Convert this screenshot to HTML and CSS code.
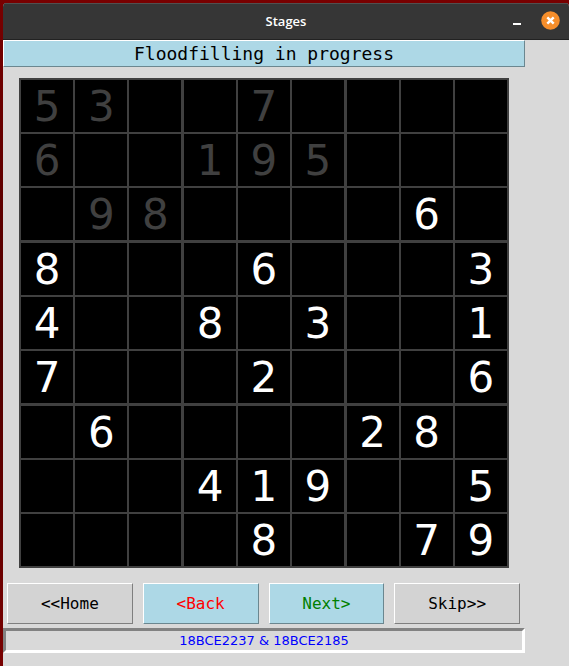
FILE: index.html
```html
<!DOCTYPE html>
<html lang="en">
<head>
<meta charset="utf-8">
<title>Stages</title>
<link rel="stylesheet" href="styles.css">
</head>
<body>
<div class="window">
  <header class="titlebar">
    <span class="titlebar-text">Stages</span>
    <div class="titlebar-actions">
      <button class="title-button" type="button" aria-label="Minimize">
        <svg width="8" height="18" viewBox="0 0 8 18"><path d="M0 11h8v2H0z" fill="#fff"/></svg>
      </button>
      <button class="title-button" type="button" aria-label="Close">
        <svg width="19" height="19" viewBox="0 0 19 19"><circle cx="9.500" cy="9.500" r="9.300" fill="#f68e2b"/><path d="M6.300 6.300l6.400 6.400M12.700 6.300l-6.400 6.400" stroke="#fff" stroke-width="2.400"/></svg>
      </button>
    </div>
  </header>
  <main class="content">
    <h1 class="status">Floodfilling in progress</h1>
    <table class="board" aria-label="Sudoku board">
      <tbody>
        <tr><td class="seen">5</td><td class="seen">3</td><td></td><td></td><td class="seen">7</td><td></td><td></td><td></td><td></td></tr>
        <tr><td class="seen">6</td><td></td><td></td><td class="seen">1</td><td class="seen">9</td><td class="seen">5</td><td></td><td></td><td></td></tr>
        <tr><td></td><td class="seen">9</td><td class="seen">8</td><td></td><td></td><td></td><td></td><td>6</td><td></td></tr>
        <tr><td>8</td><td></td><td></td><td></td><td>6</td><td></td><td></td><td></td><td>3</td></tr>
        <tr><td>4</td><td></td><td></td><td>8</td><td></td><td>3</td><td></td><td></td><td>1</td></tr>
        <tr><td>7</td><td></td><td></td><td></td><td>2</td><td></td><td></td><td></td><td>6</td></tr>
        <tr><td></td><td>6</td><td></td><td></td><td></td><td></td><td>2</td><td>8</td><td></td></tr>
        <tr><td></td><td></td><td></td><td>4</td><td>1</td><td>9</td><td></td><td></td><td>5</td></tr>
        <tr><td></td><td></td><td></td><td></td><td>8</td><td></td><td></td><td>7</td><td>9</td></tr>
      </tbody>
    </table>
    <nav class="controls" aria-label="Stage controls">
      <button class="control" type="button">&lt;&lt;Home</button>
      <button class="control control-step control-back" type="button">&lt;Back</button>
      <button class="control control-step control-next" type="button">Next&gt;</button>
      <button class="control" type="button">Skip&gt;&gt;</button>
    </nav>
    <footer class="credits">18BCE2237 &amp; 18BCE2185</footer>
  </main>
</div>
</body>
</html>
```
FILE: styles.css
```css
* {
  box-sizing: border-box;
}

body {
  margin: 0;
  padding: 3px 0 0 3px;
  min-height: 100vh;
  display: flex;
  background: linear-gradient(#780000, #500000 50%, #780000);
}

.window {
  flex: 1;
  background: #d9d9d9;
  border-radius: 4px 4px 0 0;
  overflow: hidden;
}

.titlebar {
  display: grid;
  grid-template-columns: 1fr auto 1fr;
  align-items: center;
  height: 37px;
  padding: 0 9px 2px;
  background: #363636;
  border-top: 1px solid #505050;
  border-bottom: 1px solid #222;
}

.titlebar-text {
  grid-column: 2;
  color: #fff;
  font: 600 13px/18px "Open Sans", "Noto Sans", sans-serif;
}

.titlebar-actions {
  display: flex;
  justify-content: flex-end;
  align-items: center;
  gap: 20px;
}

.title-button {
  display: flex;
  padding: 0;
  border: 0;
  background: none;
}

.content {
  padding-right: 44px;
}

.status {
  margin: 0;
  border: 1px solid;
  border-color: #fff #6b8790 #6b8790 #fff;
  background: #add8e6;
  color: #000;
  font: 400 18px/25px "DejaVu Sans Mono", monospace;
  text-align: center;
}

.board {
  width: calc(100% - 32px);
  height: 490px;
  margin: 11px 16px 0;
  table-layout: fixed;
  border-collapse: collapse;
  background: #000;
  color: #fff;
  font: 42px/48px "DejaVu Sans", Verdana, sans-serif;
  text-align: center;
}

.board td {
  padding: 3px 0 0;
  border: 2px solid #404040;
}

.board td:nth-child(3n):not(:last-child) {
  border-right-width: 3px;
}

.board tr:nth-child(3n):not(:last-child) td {
  border-bottom-width: 3px;
}

.board .seen {
  color: #404040;
}

.controls {
  display: grid;
  grid-template-columns: 126fr 116fr 116fr 126fr;
  gap: 10px;
  padding: 15px 5px 4px 4px;
}

.control {
  height: 41px;
  padding: 0;
  border: 1px solid;
  border-color: #fff #7f7f7f #7f7f7f #fff;
  background: #d3d3d3;
  color: #000;
  font: 16px/20px "DejaVu Sans Mono", monospace;
}

.control-step {
  border-color: #fff #6b8790 #6b8790 #fff;
  background: #add8e6;
}

.control-back {
  color: #f00;
}

.control-next {
  color: #008000;
}

.credits {
  border: 3px solid;
  border-color: #828282 #fff #fff #828282;
  color: #00f;
  font: 13px/19px "DejaVu Sans", sans-serif;
  text-align: center;
}
```
